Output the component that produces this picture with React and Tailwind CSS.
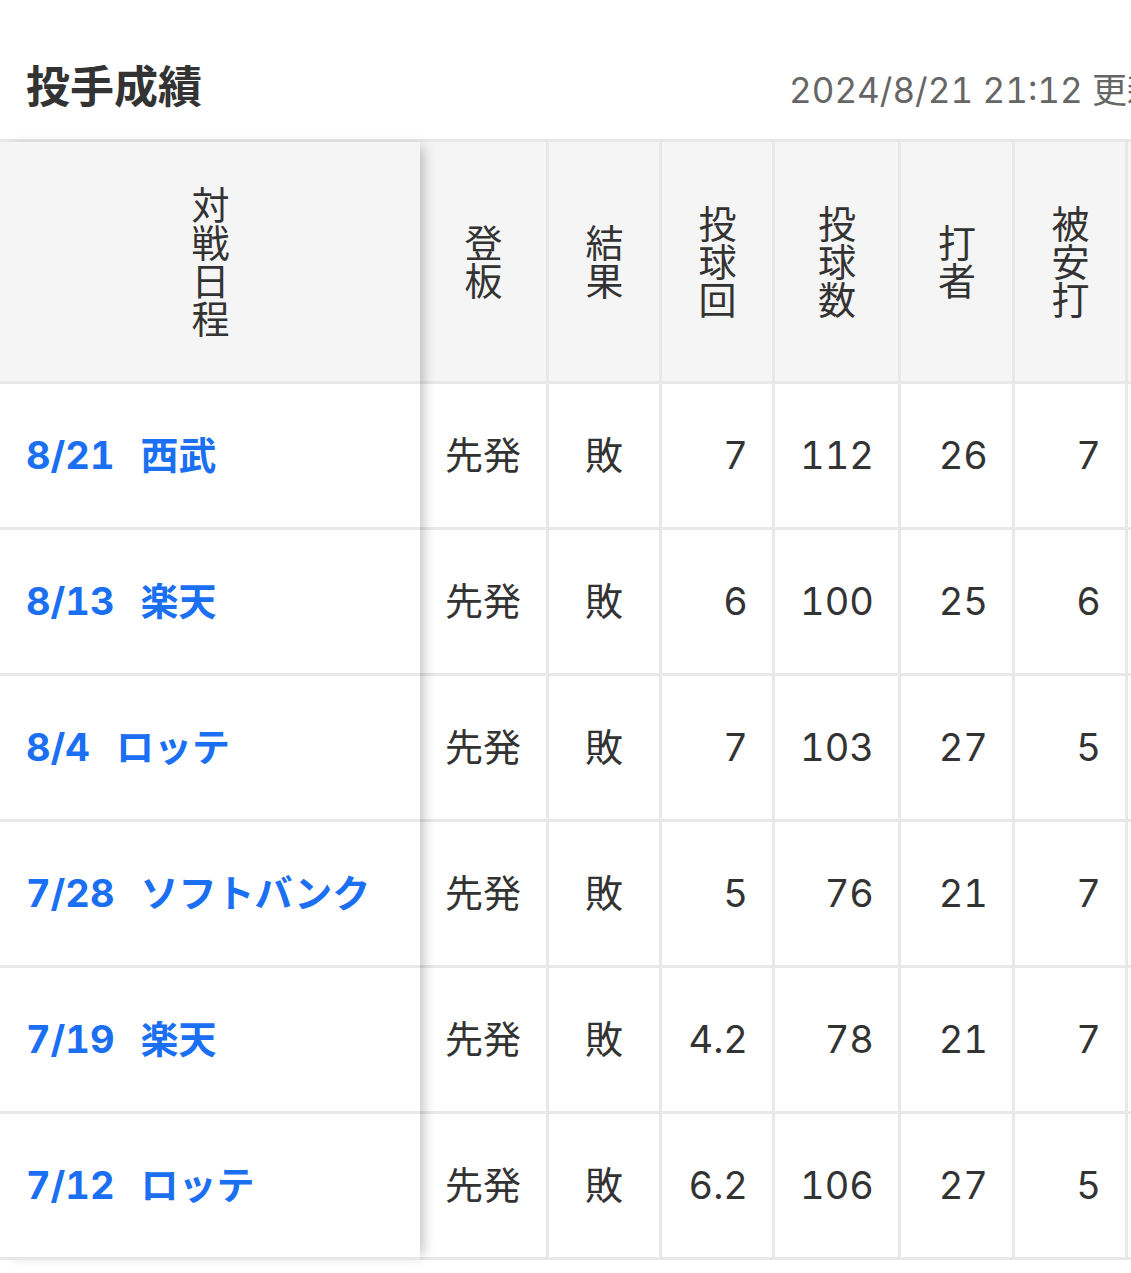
import React from 'react';

const columns = [
  { label: '登板', w: 'w-[129px]', align: 'center' },
  { label: '結果', w: 'w-[113px]', align: 'center' },
  { label: '投球回', w: 'w-[113px]', align: 'right' },
  { label: '投球数', w: 'w-[126px]', align: 'right' },
  { label: '打者', w: 'w-[114px]', align: 'right' },
  { label: '被安打', w: 'w-[113px]', align: 'right' },
  { label: '被本塁打', w: 'w-[113px]', align: 'right' },
  { label: '奪三振', w: 'w-[113px]', align: 'right' },
];

const games = [
  { date: '8/21', team: '西武', stats: ['先発', '敗', '7', '112', '26', '7', '1', '5'] },
  { date: '8/13', team: '楽天', stats: ['先発', '敗', '6', '100', '25', '6', '0', '4'] },
  { date: '8/4', team: 'ロッテ', stats: ['先発', '敗', '7', '103', '27', '5', '1', '6'] },
  { date: '7/28', team: 'ソフトバンク', stats: ['先発', '敗', '5', '76', '21', '7', '2', '3'] },
  { date: '7/19', team: '楽天', stats: ['先発', '敗', '4.2', '78', '21', '7', '1', '2'] },
  { date: '7/12', team: 'ロッテ', stats: ['先発', '敗', '6.2', '106', '27', '5', '0', '5'] },
];

// header labels are stacked vertically, one character per line
const VerticalLabel = ({ text }) => (
  <span className="[writing-mode:vertical-rl] font-['Noto_Sans_CJK_JP',sans-serif] text-[38px] leading-[1.1] text-[#333]">
    {text}
  </span>
);

const App = () => {
  return (
    <div className="w-[1131px] h-[1273px] overflow-hidden bg-white font-['Inter','Noto_Sans_CJK_JP',sans-serif] tabular-nums">
      {/* heading */}
      <div className="flex items-baseline h-[139px] pt-[54px] pl-[26px] whitespace-nowrap">
        <h2 className="w-[763px] shrink-0 text-[44px] font-bold text-[#333]">投手成績</h2>
        <span className="shrink-0 text-[35px] text-[#666]">2024/8/21 21:12 更新</span>
      </div>

      {/* table */}
      <div className="flex border-t-[3px] border-[#e8e8e8]">
        {/* fixed first column */}
        <div className="w-[420px] shrink-0 relative z-10 shadow-[8px_0_12px_-5px_rgba(0,0,0,0.25)]">
          <div className="h-[242px] flex items-center justify-center bg-[#f5f5f5] border-b-[3px] border-[#e8e8e8]">
            <VerticalLabel text="対戦日程" />
          </div>
          {games.map((g) => (
            <div
              key={g.date}
              className="h-[146px] flex items-center gap-[26px] pl-[26px] bg-white border-b-[3px] border-[#e8e8e8] text-[38px] font-bold text-[#1a6ff2] whitespace-nowrap"
            >
              <span>{g.date}</span>
              <span>{g.team}</span>
            </div>
          ))}
        </div>

        {/* stat columns */}
        <div className="shrink-0 flex flex-col">
          <div className="flex h-[242px] bg-[#f5f5f5] border-b-[3px] border-[#e8e8e8]">
            {columns.map((c) => (
              <div
                key={c.label}
                className={`${c.w} shrink-0 flex items-center justify-center border-r-[3px] border-[#e8e8e8]`}
              >
                <VerticalLabel text={c.label} />
              </div>
            ))}
          </div>
          {games.map((g) => (
            <div key={g.date} className="flex h-[146px] border-b-[3px] border-[#e8e8e8]">
              {g.stats.map((v, i) => (
                <div
                  key={i}
                  className={`${columns[i].w} shrink-0 flex items-center border-r-[3px] border-[#e8e8e8] text-[38px] text-[#333] ${
                    columns[i].align === 'center' ? 'justify-center' : 'justify-end pr-[24px]'
                  }`}
                >
                  {v}
                </div>
              ))}
            </div>
          ))}
        </div>
      </div>
    </div>
  );
};

export default App;
